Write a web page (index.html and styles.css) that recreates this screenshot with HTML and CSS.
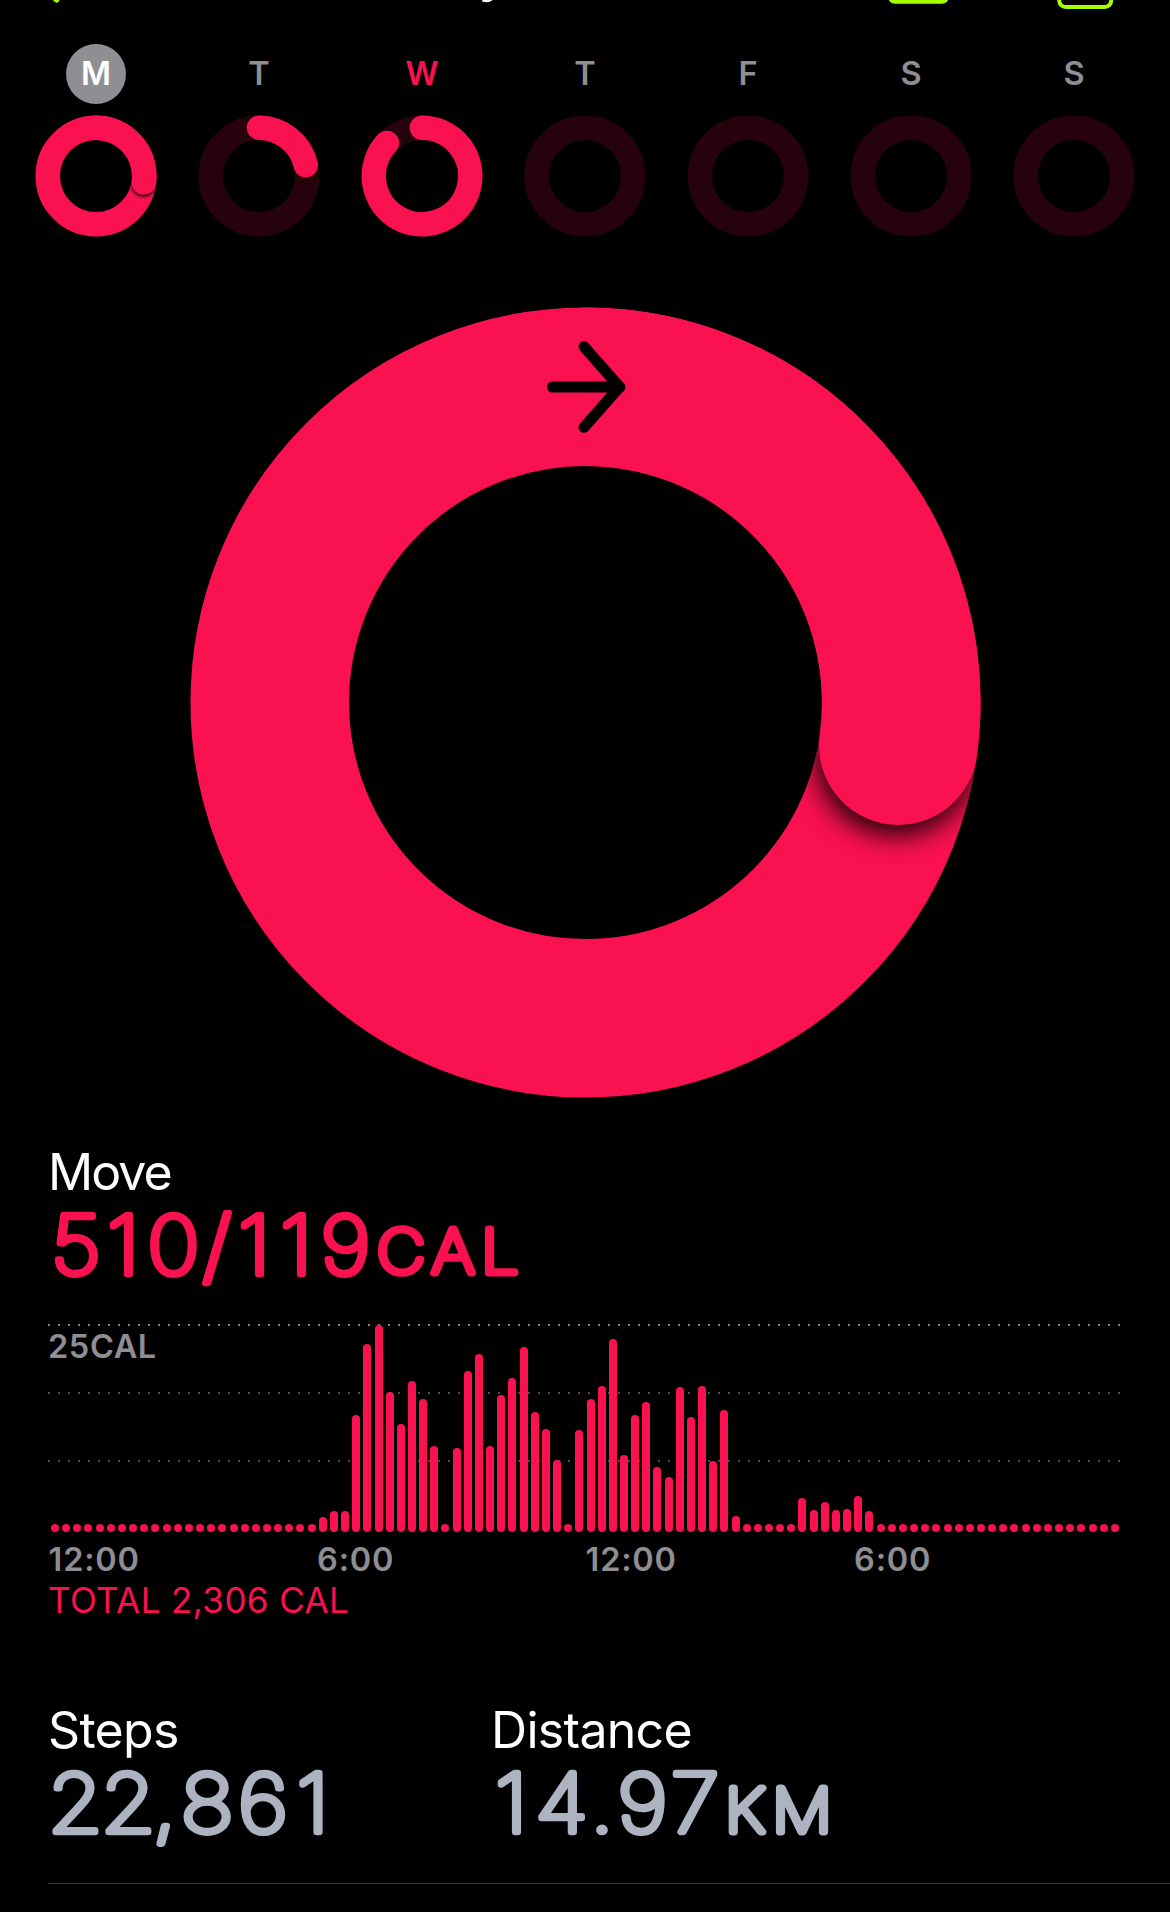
FILE: index.html
```html
<!DOCTYPE html>
<html lang="en">
<head>
<meta charset="utf-8">
<title>Activity</title>
<link rel="stylesheet" href="styles.css">
</head>
<body>
<main class="screen">
  <header class="topbar">
    <svg class="topbar-icons" width="1170" height="12" viewBox="0 0 1170 12">
      <path d="M40 -18L56.500 -.5" fill="none" stroke="#a6ff00" stroke-width="6" stroke-linecap="round"/>
      <rect x="888" y="-40" width="61" height="43.700" rx="7" fill="#a6ff00"/>
      <rect x="1059.200" y="-40" width="52" height="47" rx="6.500" fill="none" stroke="#a6ff00" stroke-width="4"/>
      <text class="topbar-title" x="479" y="-8">y</text>
    </svg>
  </header>

  <nav class="week">
    <div class="day"><span class="day-name selected">M</span>
      <svg class="mini" viewBox="0 0 122 122"><circle class="fill" cx="61" cy="61" r="48.250"/><g clip-path="url(#mini-clip)"><circle class="mini-shadow" cx="108.500" cy="69.500" r="12.250"/></g><path class="fill" d="M61 12.750A48.250 48.250 0 0 1 108.800 67.600"/></svg></div>
    <div class="day"><span class="day-name">T</span>
      <svg class="mini" viewBox="0 0 122 122"><circle class="track" cx="61" cy="61" r="48.250"/><path class="fill" d="M61 12.750A48.250 48.250 0 0 1 107.700 50"/></svg></div>
    <div class="day"><span class="day-name today">W</span>
      <svg class="mini" viewBox="0 0 122 122"><circle class="track" cx="61" cy="61" r="48.250"/><path class="fill" d="M61 12.750A48.250 48.250 0 1 1 25.900 27.900"/></svg></div>
    <div class="day"><span class="day-name">T</span>
      <svg class="mini" viewBox="0 0 122 122"><circle class="track" cx="61" cy="61" r="48.250"/></svg></div>
    <div class="day"><span class="day-name">F</span>
      <svg class="mini" viewBox="0 0 122 122"><circle class="track" cx="61" cy="61" r="48.250"/></svg></div>
    <div class="day"><span class="day-name">S</span>
      <svg class="mini" viewBox="0 0 122 122"><circle class="track" cx="61" cy="61" r="48.250"/></svg></div>
    <div class="day"><span class="day-name">S</span>
      <svg class="mini" viewBox="0 0 122 122"><circle class="track" cx="61" cy="61" r="48.250"/></svg></div>
  </nav>

  <svg class="ring" width="792" height="792" viewBox="0 -.5 792 792">
    <defs>
      <clipPath id="ring-clip"><path clip-rule="evenodd" d="M396.500 1a395 395 0 0 1 0 790a395 395 0 0 1 0 -790zM396.500 159.500a236.500 236.500 0 0 0 0 473a236.500 236.500 0 0 0 0 -473z"/></clipPath>
      <clipPath id="mini-clip"><path clip-rule="evenodd" d="M61 .5a60.500 60.500 0 0 1 0 121a60.500 60.500 0 0 1 0 -121zM61 25a36 36 0 0 0 0 72a36 36 0 0 0 0 -72z"/></clipPath>
      <filter id="soft" x="-50%" y="-50%" width="200%" height="200%"><feGaussianBlur stdDeviation="14"/></filter>
      <filter id="soft-mini" x="-50%" y="-50%" width="200%" height="200%"><feGaussianBlur stdDeviation="1.600"/></filter>
    </defs>
    <circle class="ring-line" cx="396.500" cy="396" r="315.750"/>
    <g clip-path="url(#ring-clip)"><circle cx="707" cy="449" r="79" filter="url(#soft)" opacity=".95"/></g>
    <path class="ring-line" d="M396.500 80.250A315.750 315.750 0 0 1 709.300 439.200"/>
    <path class="arrow" d="M363.500 80.500H431M395 40.200L430.500 80.500L395 120.800"/>
  </svg>

  <section class="move">
    <h2 class="label label-move">Move</h2>
    <svg class="value value-move" width="500" height="86" viewBox="0 0 500 86">
      <text class="digits" y="72" x="25.300 68.500 114 153.600 187.500 225.700 270.500">510/119</text>
      <text class="unit" y="71.500" x="320.900 368.200 410.800">CAL</text>
    </svg>
    <div class="chart">
      <span class="chart-max">25CAL</span>
      <div class="grid grid-top"></div>
      <div class="grid"></div>
      <div class="grid"></div>
      <div class="bars" id="bars"></div>
    </div>
    <div class="hours"><span>12:00</span><span>6:00</span><span>12:00</span><span>6:00</span></div>
    <p class="total">TOTAL 2,306 CAL</p>
  </section>

  <section class="stats">
    <div class="stat"><h2 class="label label-steps">Steps</h2>
      <svg class="value" width="400" height="90" viewBox="0 0 400 90"><text class="digits" y="72" x="24.800 73 106.200 144.800 195.500 240.800">22,861</text></svg></div>
    <div class="stat"><h2 class="label label-distance">Distance</h2>
      <svg class="value" width="400" height="90" viewBox="0 0 400 90"><text class="digits" y="72" x="16.600 62.300 99.100 135.900 183.600">14.97</text><text class="unit" y="72" x="229 280.900">KM</text></svg></div>
  </section>
</main>
<script src="script.js"></script>
</body>
</html>
```
FILE: styles.css
```css
* { box-sizing: border-box; }
body { margin: 0; background: #000; }
.screen {
  width: 1170px; height: 1912px; overflow: hidden;
  background: #000; color: #fff;
  font-family: Inter, "Liberation Sans", sans-serif;
}
svg { display: block; }
h2, p { margin: 0; font-weight: 400; }

.topbar { height: 44px; }
.topbar-title { font-size: 50px; font-weight: 600; fill: #fff; }

.week { display: flex; justify-content: space-between; padding: 0 35px; height: 193px; }
.day { width: 122px; display: flex; flex-direction: column; align-items: center; gap: 11px; }
.day-name {
  width: 60px; height: 60px; border-radius: 50%;
  font-size: 32.5px; font-weight: 580; line-height: 60px; text-align: center; color: #8e8e93;
}
.day-name.selected { background: #8e8e93; color: #fff; }
.day-name.today { color: #fa114f; }
.mini { width: 122px; height: 122px; }
.mini circle, .mini path { fill: none; stroke-width: 24.5; stroke-linecap: round; }
.mini .fill { stroke: #fa114f; }
.mini .track { stroke: #25020c; }
.mini .mini-shadow { fill: #000; opacity: .8; filter: url(#soft-mini); }

.ring { margin: 69px 0 0 189px; }
.ring-line { fill: none; stroke: #fa114f; stroke-width: 158.5; stroke-linecap: round; }
.arrow { fill: none; stroke: #000; stroke-width: 11; stroke-linecap: round; stroke-linejoin: round; }

.move { padding: 44px 49px 0 48px; }
.label { height: 60px; font-size: 50px; line-height: 60px; font-weight: 400; }
.label-move { letter-spacing: -1.9px; }
.label-steps { letter-spacing: -.7px; }
.label-distance { letter-spacing: -.7px; margin-left: -2px; }
.value { overflow: visible; fill: #adb3c1; stroke: #adb3c1; }
.value-move { fill: #fa114f; stroke: #fa114f; }
/* A thin face with a round-joined outline gives the numerals soft ends. */
.digits, .unit {
  stroke-linejoin: round; stroke-linecap: round; font-weight: 100;
  text-anchor: middle; transform: scaleX(1.1);
}
.digits { font-size: 80.5px; stroke-width: 6.5px; }
.unit { font-size: 60.5px; stroke-width: 7px; }

.chart { position: relative; height: 208px; margin-top: 36px; }
.grid {
  height: 2px; margin-bottom: 66px; width: 1073px;
  background: repeating-linear-gradient(90deg, #4d4d4d 0 2px, transparent 2px 10px);
}
.grid-top { background: repeating-linear-gradient(90deg, #858585 0 2px, transparent 2px 10px); }
.chart-max {
  position: absolute; left: 0; top: 3px;
  font-size: 32.5px; line-height: 40px; font-weight: 580; letter-spacing: .6px; color: #8e8e93;
}
.bars {
  position: absolute; left: 3px; right: 2px; bottom: 0; height: 208px;
  display: flex; justify-content: space-between; align-items: flex-end;
}
.bar { width: 8px; border-radius: 4px; background: #fa114f; }

.hours {
  display: grid; grid-template-columns: repeat(4, 268.5px); padding-left: .6px; margin-top: 8px;
  font-size: 32.5px; line-height: 40px; font-weight: 580; letter-spacing: .8px; color: #8e8e93;
}
.total { margin-top: -1px; font-size: 35px; line-height: 42px; letter-spacing: .4px; color: #fa114f; }

.stats {
  display: grid; grid-template-columns: 445px 1fr; height: 184px;
  margin: 79px 0 0 48px; border-bottom: 1px solid #38383a;
}
```
FILE: script.js
```js
// Calories per 15 minutes, as bar heights in pixels; 0 is an idle slot.
const idle = (n) => Array(n).fill(0);
const slots = [
  ...idle(24), 15, 20.7, 21.3, 117, 188.3, 207.3, 140.3, 108, 151, 133, 86, 0,
  83.7, 161, 178.3, 85.7, 137.3, 154, 184.7, 120.3, 103, 72, 0,
  102.3, 133.3, 146.3, 193.3, 77, 117, 130.3, 65.3, 55.3, 145.3, 114.7, 145.7, 71, 121.7, 16,
  ...idle(5), 34, 22.3, 29.7, 22.3, 22.7, 36, 21.3, ...idle(22),
];
const bars = document.getElementById("bars");
for (const height of slots) {
  const bar = document.createElement("span");
  bar.className = "bar";
  bar.style.height = Math.max(8, height) + "px";
  bars.append(bar);
}
```
